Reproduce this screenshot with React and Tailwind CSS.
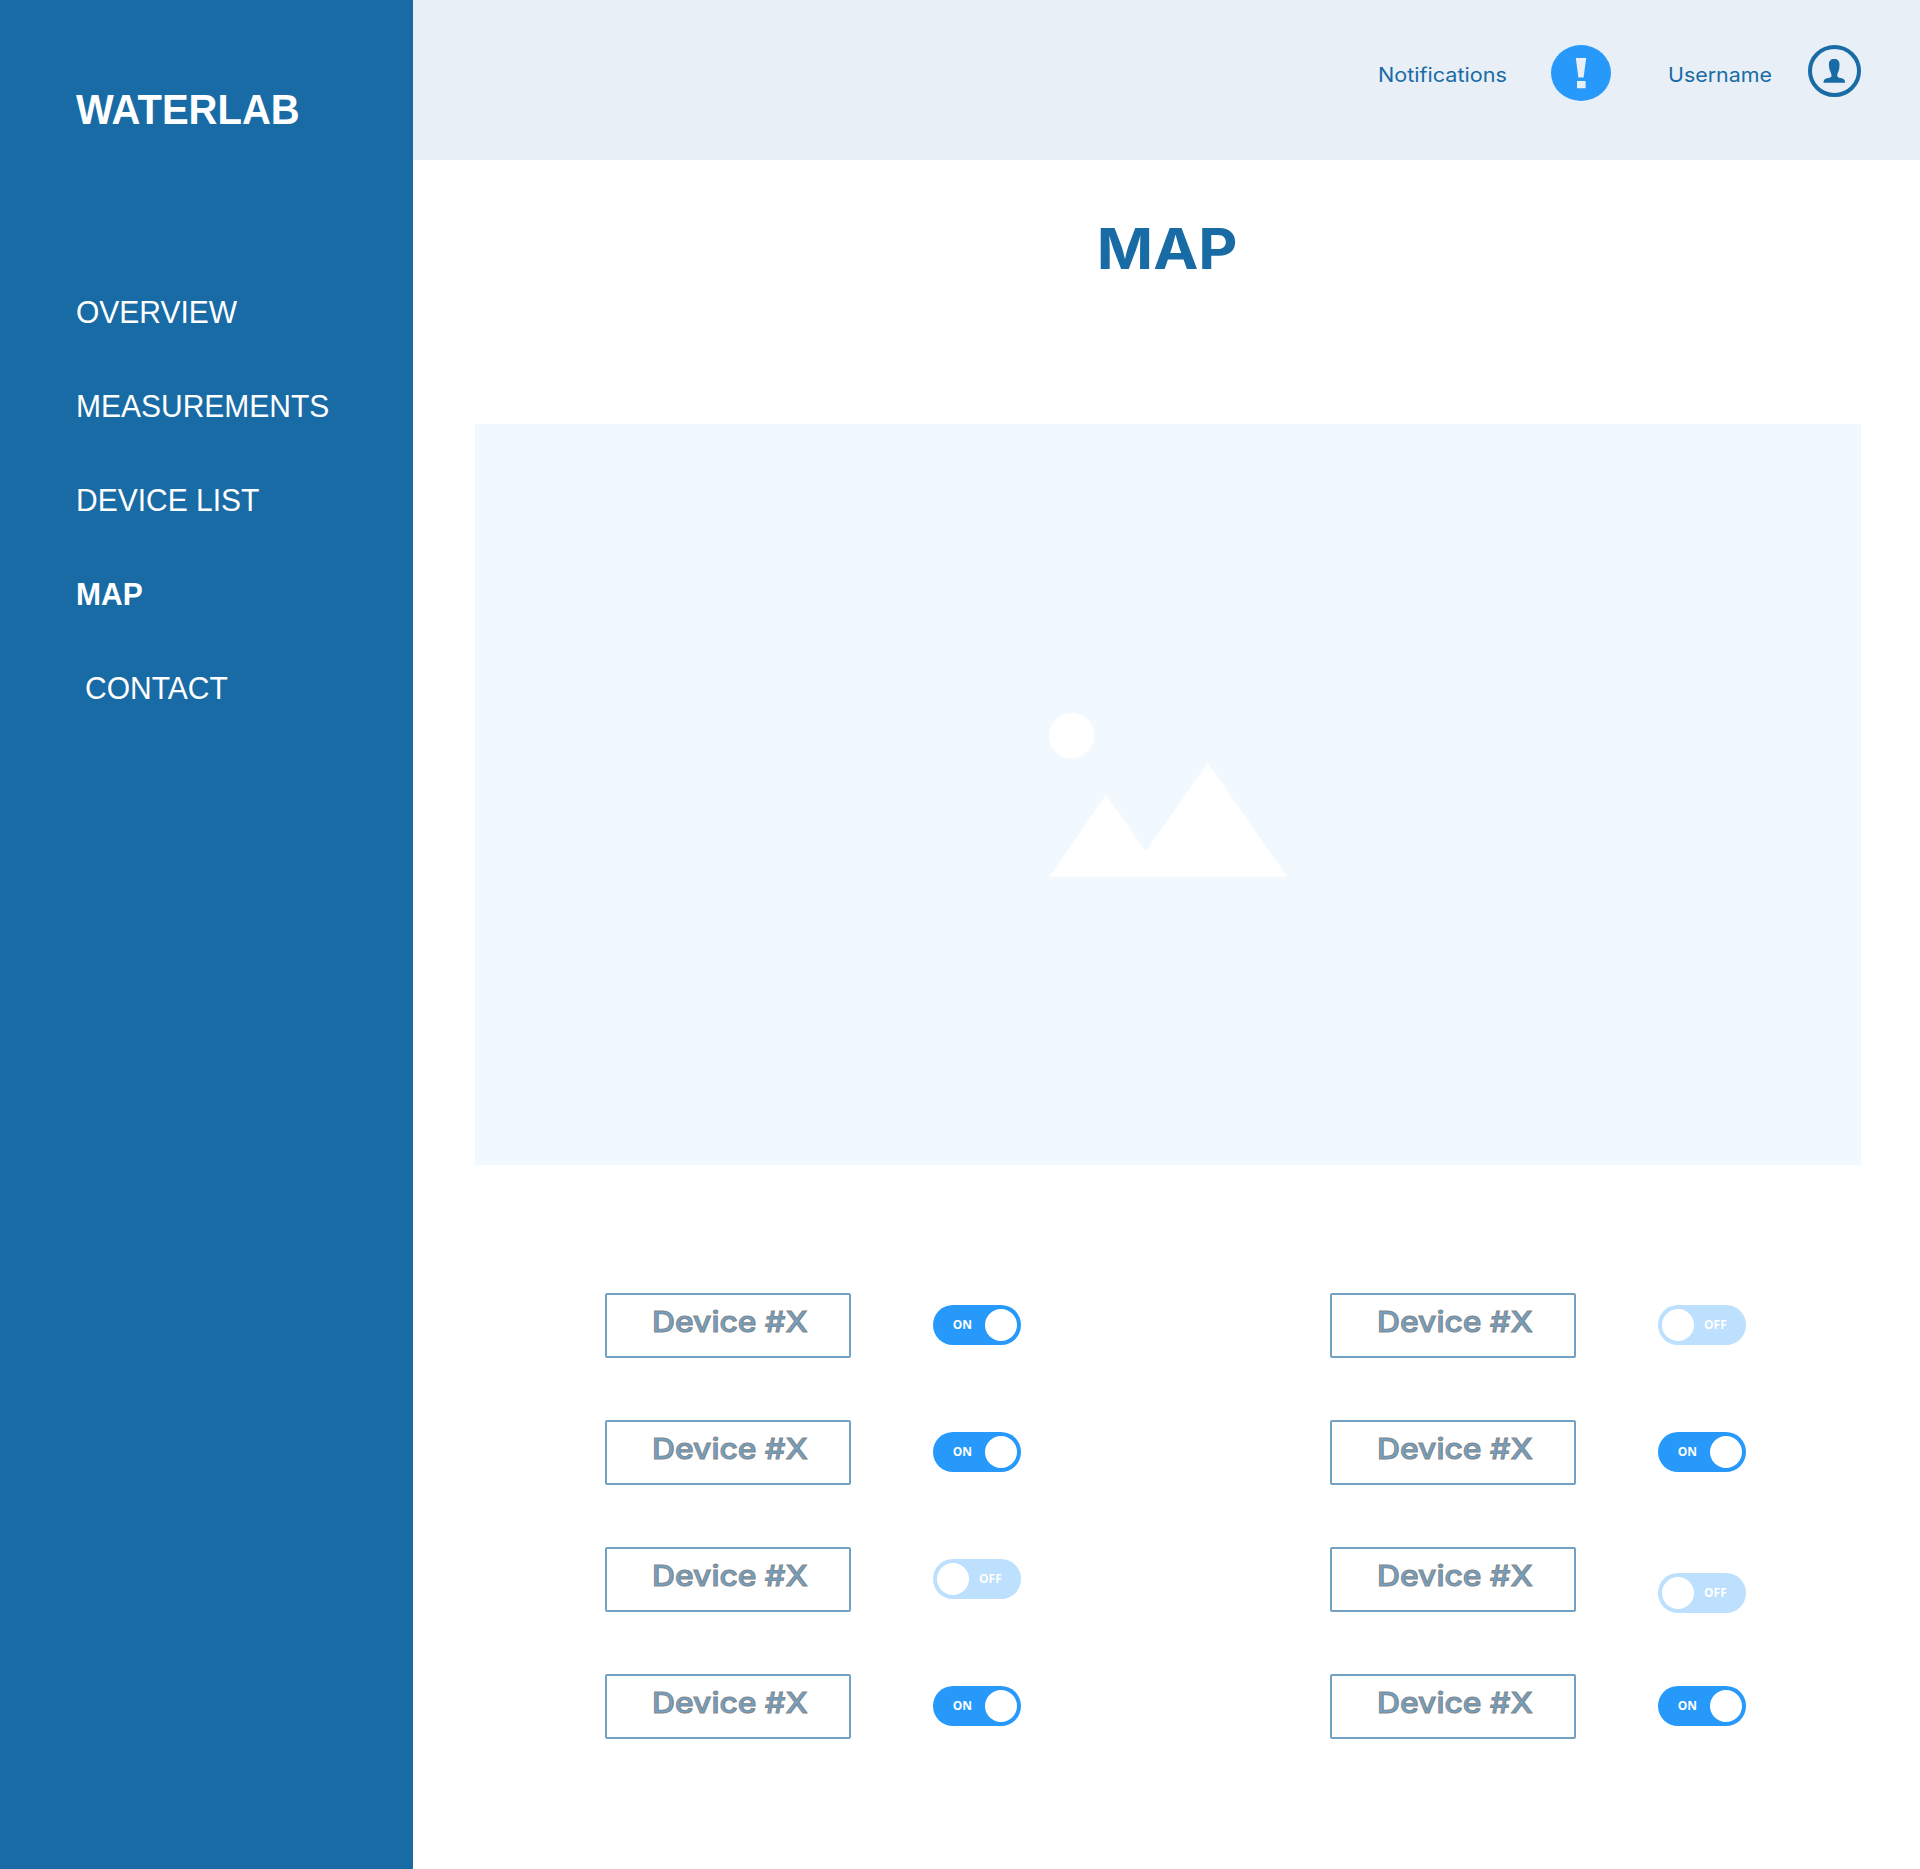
const NAV = [
  { label: 'OVERVIEW' },
  { label: 'MEASUREMENTS' },
  { label: 'DEVICE LIST' },
  { label: 'MAP', active: true },
  { label: 'CONTACT', indent: true },
];

const DEVICES = [
  [{ on: true }, { on: false }],
  [{ on: true }, { on: true }],
  [{ on: false }, { on: false, shifted: true }],
  [{ on: true }, { on: true }],
];

function Sidebar() {
  return (
    <aside className="flex w-[413px] shrink-0 flex-col bg-[#196ba5] pl-[76px] pt-[86px] font-['Liberation_Sans',Arial,sans-serif] text-white">
      <h1 className="scale-y-[1.05] text-[40px] font-bold leading-[46px]">WATERLAB</h1>
      <nav className="mt-[163px] flex flex-col gap-[60px] text-[30px] leading-[34px]">
        {NAV.map((item) => (
          <a
            key={item.label}
            className={`scale-y-[1.06] ${item.active ? 'font-bold' : ''} ${item.indent ? 'pl-[9px]' : ''}`}
          >
            {item.label}
          </a>
        ))}
      </nav>
    </aside>
  );
}

function Header() {
  return (
    <header className="flex h-40 items-start bg-[#e8eff7] pl-[965px] pt-[45px] text-xl leading-6 text-[#196ba5]">
      <span className="mt-[18px] w-[173px] whitespace-nowrap">
        <span className="inline-block origin-left scale-x-[1.08]">Notifications</span>
      </span>
      <svg className="h-14 w-[60px] shrink-0" viewBox="0 0 60 56">
        <ellipse cx="30" cy="28" rx="30" ry="28" fill="#2699fb" />
        <path d="M24.8 13h10.4l-2.6 19.5h-5.2zM26 36h8.6v7.2H26z" fill="#e8eff7" />
      </svg>
      <span className="ml-[57px] mt-[18px] w-[140px] whitespace-nowrap">
        <span className="inline-block origin-left scale-x-[1.07]">Username</span>
      </span>
      <svg className="h-[52px] w-[53px] shrink-0" viewBox="0 0 53 52">
        <ellipse cx="26.5" cy="26" rx="24.5" ry="24" fill="none" stroke="#196ba5" strokeWidth="4" />
        <path d="M26.2 14c3.600 0 5.300 2 5.300 5.200 0 2.500-.2 5.300-1.100 7.300-.9 1.800-1.100 2.700-1.100 4.300 0 1.400 1.200 2 3.200 2.300 2.900.4 4.500 1.600 4.700 4.600H15.400c.2-3 1.800-4.200 4.700-4.600 2.200-.3 3.400-.9 3.400-2.300 0-1.600-.4-2.500-1.200-4.300-.9-2-1.400-4.800-1.400-7.300 0-3.200 1.700-5.200 5.300-5.200z" fill="#196ba5" />
      </svg>
    </header>
  );
}

function Toggle({ on, shifted }) {
  return (
    <div
      className={`flex h-10 w-[88px] items-center rounded-full p-1 font-['Open_Sans',sans-serif] text-xs font-bold leading-4 text-white ${
        on ? 'justify-end bg-[#2699fb]' : 'bg-[#bce0fd]'
      } ${shifted ? 'mt-[26px]' : 'mt-3'}`}
    >
      {on && <span className="mr-[13px]">ON</span>}
      <span className="size-8 rounded-full bg-white" />
      {!on && <span className="ml-[10px]">OFF</span>}
    </div>
  );
}

function Device({ on, shifted }) {
  return (
    <div className="flex items-start gap-[82px]">
      <div className="h-[65px] w-[246px] rounded-[2px] border-2 border-[#72a2c3] pl-[3px] pt-[7px] text-center">
        <span className="inline-block scale-x-[1.1] whitespace-nowrap text-[29px] font-medium leading-10 text-[#6fa2c6] [-webkit-text-stroke:1px_#84878a]">
          Device #X
        </span>
      </div>
      <Toggle on={on} shifted={shifted} />
    </div>
  );
}

export default function App() {
  return (
    <div className="flex h-[1869px] w-[1920px] overflow-hidden bg-white font-['Inter',sans-serif]">
      <Sidebar />
      <main className="flex min-w-0 flex-1 flex-col">
        <Header />
        <div className="flex flex-col pl-[62px] pr-[59px]">
          <h2 className="mt-[53px] pr-px text-center text-[56px] font-bold leading-[72px] text-[#196ba5]">
            <span className="inline-block scale-x-[1.08]">MAP</span>
          </h2>
          <div className="mt-[139px] flex h-[741px] items-center justify-center bg-[#f1f9ff]">
            <svg className="h-[164px] w-[238px]" viewBox="0 0 238 164">
              <circle cx="22.700" cy="22.700" r="22.700" fill="#fff" />
              <path d="M0.500 163.500 57 82l39.700 56.500L158.700 50 238 163.500z" fill="#fff" />
            </svg>
          </div>
          <div className="mt-[128px] flex flex-col gap-[62px] pl-[130px]">
            {DEVICES.map((row, i) => (
              <div key={i} className="flex h-[65px] gap-[309px]">
                {row.map((device, j) => (
                  <Device key={j} {...device} />
                ))}
              </div>
            ))}
          </div>
        </div>
      </main>
    </div>
  );
}
